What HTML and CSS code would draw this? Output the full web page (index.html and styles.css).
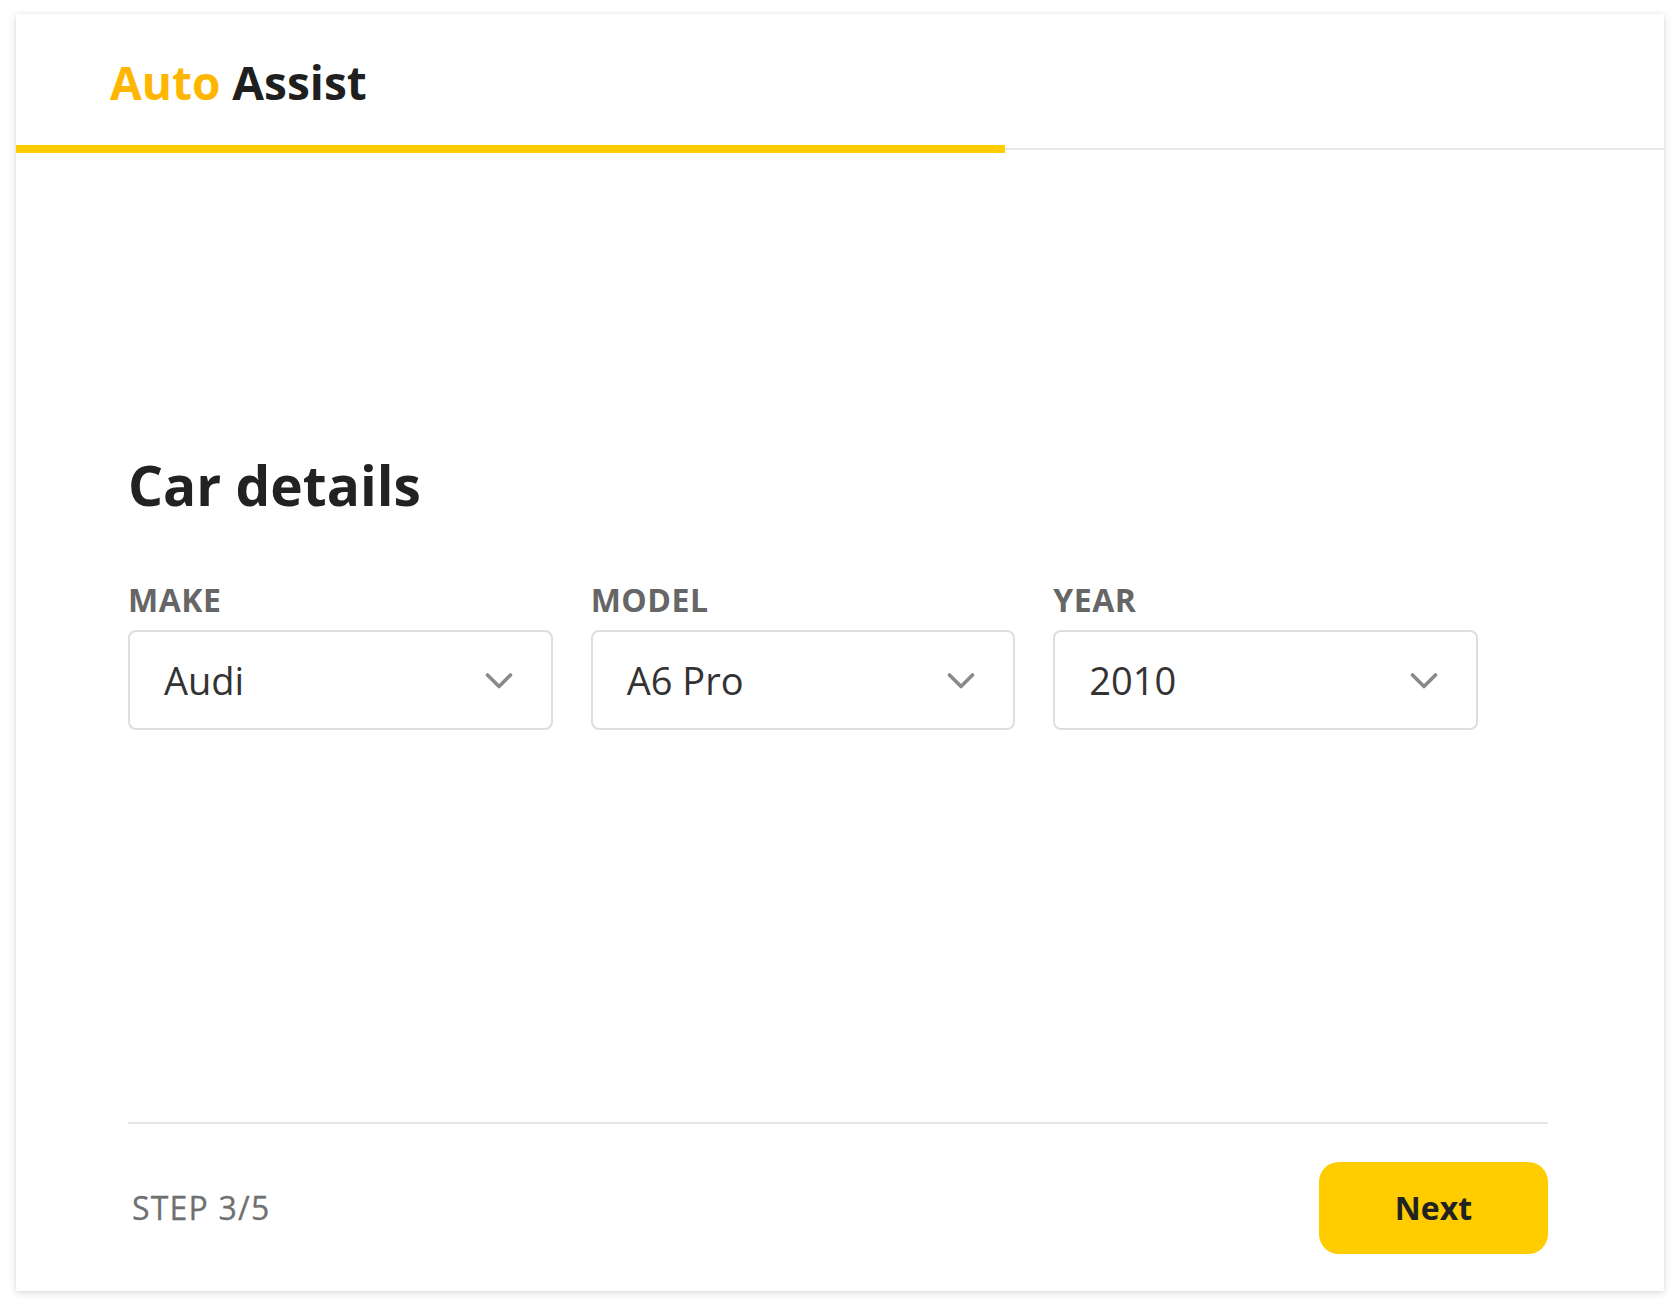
FILE: index.html
```html
<!DOCTYPE html>
<html lang="en">
<head>
<meta charset="utf-8">
<title>Auto Assist – Car details</title>
<link rel="stylesheet" href="styles.css">
</head>
<body>
<div class="card">
  <header class="header">
    <div class="logo"><span class="logo-accent">Auto</span> Assist</div>
  </header>
  <div class="progress">
    <div class="progress-fill"></div>
    <div class="progress-rest"></div>
  </div>
  <main class="main">
    <h1 class="title">Car details</h1>
    <div class="fields">
      <div class="field">
        <div class="label">MAKE</div>
        <div class="select">
          <span class="value">Audi</span>
          <svg class="chev" width="28" height="18" viewBox="0 0 28 18"><path d="M2.5 3 L14 14.5 L25.5 3" fill="none" stroke="#8a8a8a" stroke-width="3.6" stroke-linecap="round" stroke-linejoin="round"/></svg>
        </div>
      </div>
      <div class="field">
        <div class="label">MODEL</div>
        <div class="select">
          <span class="value">A6 Pro</span>
          <svg class="chev" width="28" height="18" viewBox="0 0 28 18"><path d="M2.5 3 L14 14.5 L25.5 3" fill="none" stroke="#8a8a8a" stroke-width="3.6" stroke-linecap="round" stroke-linejoin="round"/></svg>
        </div>
      </div>
      <div class="field">
        <div class="label">YEAR</div>
        <div class="select">
          <span class="value">2010</span>
          <svg class="chev" width="28" height="18" viewBox="0 0 28 18"><path d="M2.5 3 L14 14.5 L25.5 3" fill="none" stroke="#8a8a8a" stroke-width="3.6" stroke-linecap="round" stroke-linejoin="round"/></svg>
        </div>
      </div>
    </div>
  </main>
  <footer class="footer">
    <div class="step">STEP 3/5</div>
    <button class="next">Next</button>
  </footer>
</div>
</body>
</html>
```

FILE: styles.css
```css
* { box-sizing: border-box; }

html, body {
  margin: 0;
  background: #ffffff;
}

body {
  padding: 14px 16px 19px;
  font-family: "Open Sans", "Noto Sans", "Liberation Sans", sans-serif;
  color: #222222;
}

.card {
  height: 1277px;
  background: #ffffff;
  box-shadow: 0 2px 8px rgba(0, 0, 0, 0.14), 0 0 2px rgba(0, 0, 0, 0.06);
  display: flex;
  flex-direction: column;
}

.header {
  height: 131px;
  padding-left: 94px;
  padding-top: 5px;
  display: flex;
  align-items: center;
}

.logo {
  font-size: 46px;
  line-height: 48px;
  font-weight: 700;
  color: #1f1f1f;
}

.logo-accent {
  color: #ffb600;
}

.progress {
  height: 8px;
  display: flex;
  align-items: center;
}

.progress-fill {
  width: 60%;
  height: 8px;
  background: #ffcc00;
}

.progress-rest {
  flex: 1;
  height: 2px;
  background: #e8e8e8;
}

.main {
  flex: 1;
  padding: 298px 116px 0 112px;
}

.title {
  margin: 0 0 62px;
  font-size: 55px;
  line-height: 67px;
  font-weight: 700;
  color: #222222;
}

.fields {
  display: grid;
  grid-template-columns: repeat(3, 1fr);
  column-gap: 38px;
  max-width: 1350px;
}

.field {
  display: flex;
  flex-direction: column;
}

.label {
  font-size: 32px;
  line-height: 40px;
  font-weight: 700;
  letter-spacing: 0.5px;
  color: #666666;
  margin-bottom: 10px;
}

.select {
  height: 100px;
  border: 2px solid #dedede;
  border-radius: 8px;
  padding: 0 38px 0 34px;
  display: flex;
  align-items: center;
  justify-content: space-between;
}

.value {
  font-size: 38px;
  line-height: 46px;
  color: #333333;
}

.chev {
  display: block;
  margin-top: 2px;
}

.footer {
  margin: 0 116px 0 112px;
  border-top: 2px solid #e6e6e6;
  padding: 38px 0 37px;
  display: flex;
  align-items: center;
  justify-content: space-between;
}

.step {
  font-size: 32px;
  line-height: 40px;
  letter-spacing: 1.2px;
  color: #707070;
  padding-left: 4px;
  -webkit-text-stroke: 0.3px #707070;
}

.next {
  width: 229px;
  height: 92px;
  border: none;
  border-radius: 20px;
  background: #ffcc00;
  font-family: "Open Sans", "Noto Sans", "Liberation Sans", sans-serif;
  font-size: 32px;
  line-height: 40px;
  font-weight: 700;
  color: #222222;
  padding: 0;
}
```
